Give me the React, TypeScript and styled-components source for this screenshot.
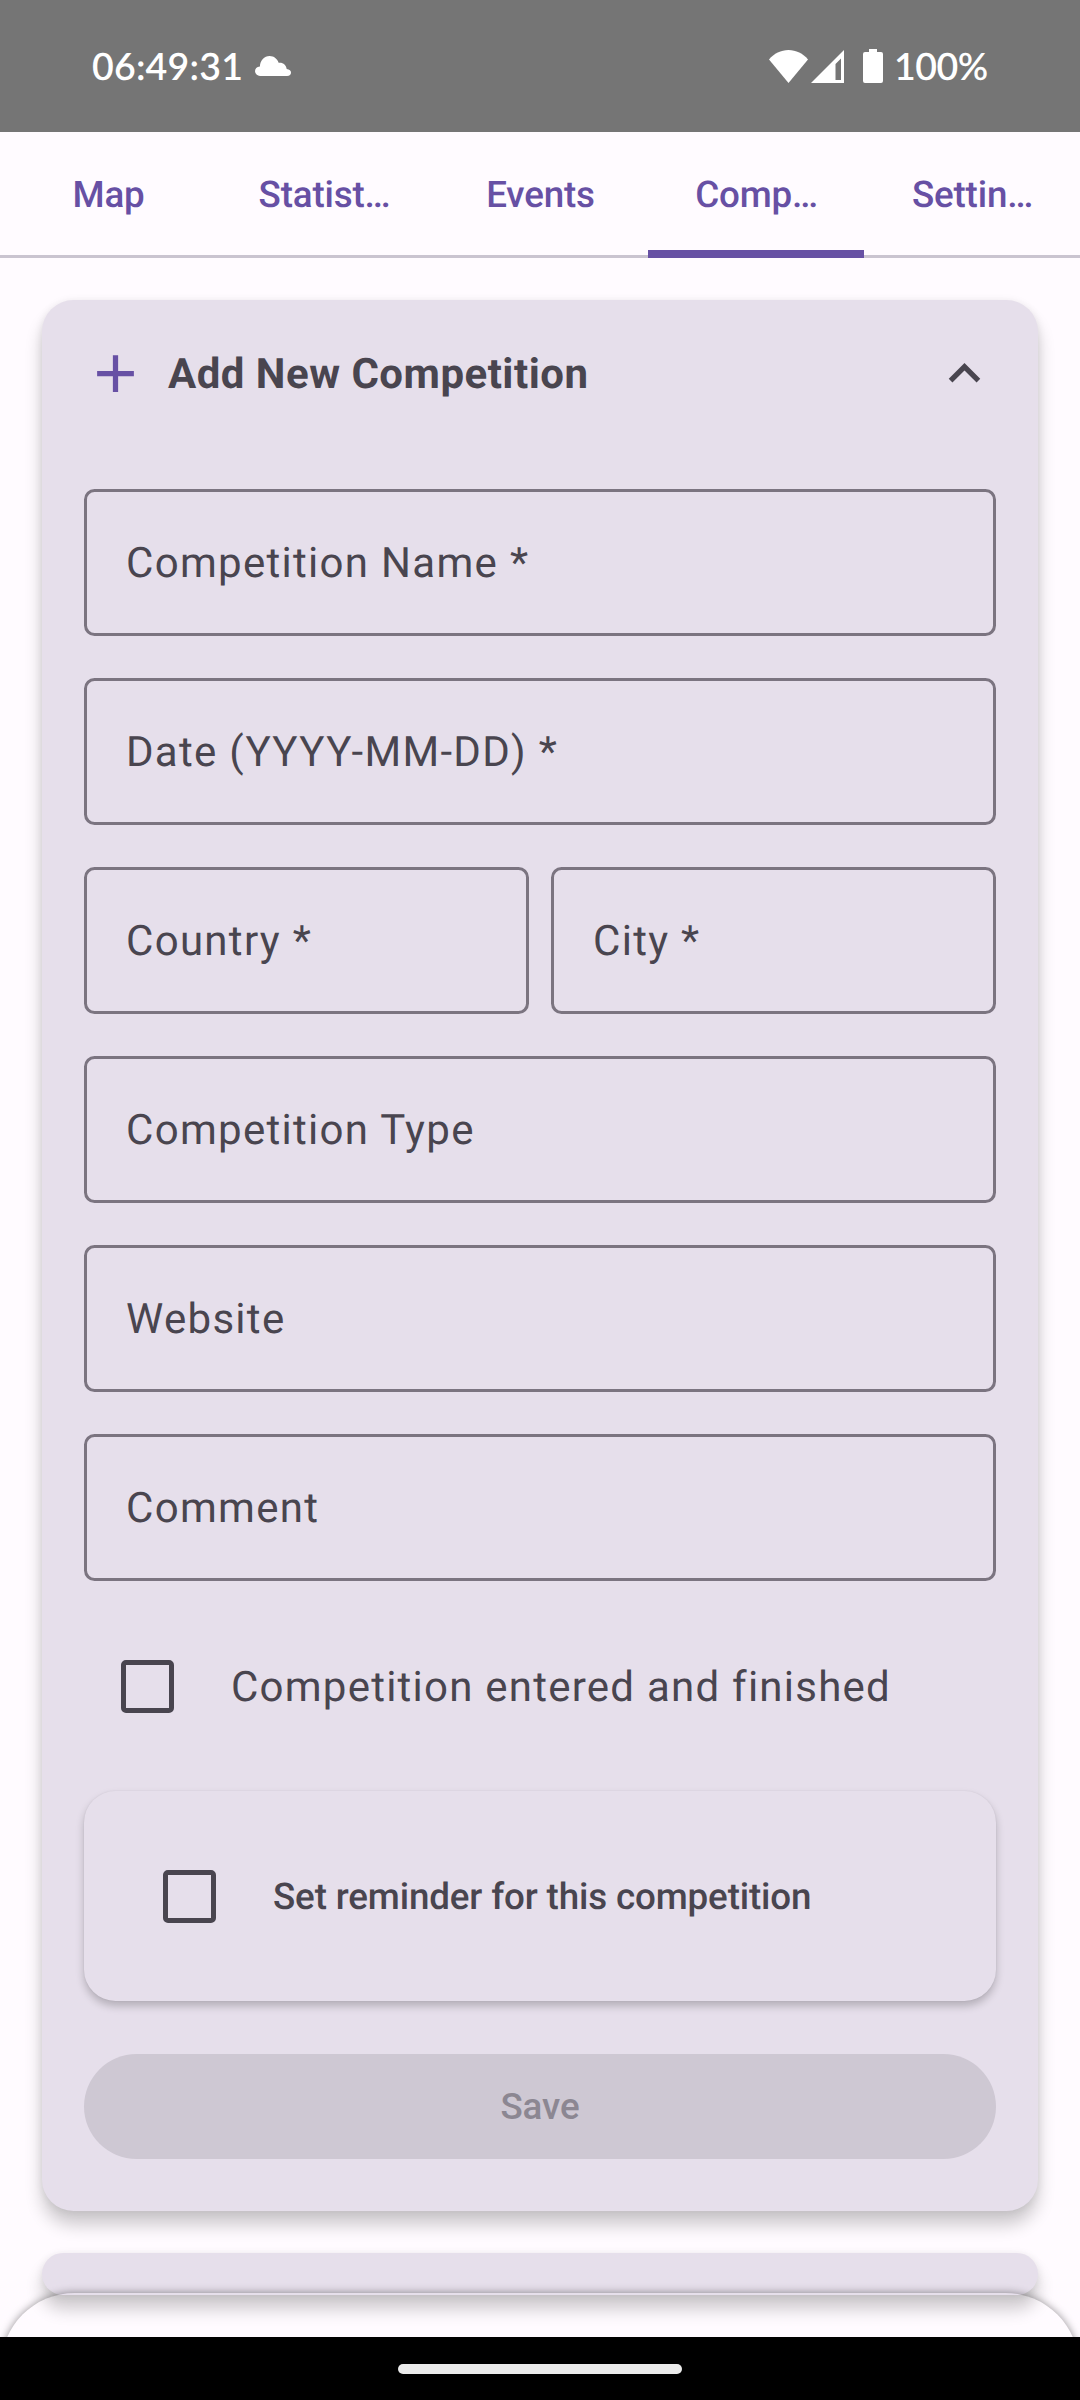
import React from "react";
import styled, { createGlobalStyle } from "styled-components";

const color = {
  background: "#fffbff",
  surface: "#e6dfeb",
  onSurface: "#49454f",
  outline: "#7b7480",
  divider: "#cac4d0",
  primary: "#6750a4",
};

const GlobalStyle = createGlobalStyle`
  * { box-sizing: border-box; }
  body { margin: 0; background: ${color.background}; }
`;

const Screen = styled.div`
  width: 1080px;
  height: 2400px;
  display: flex;
  flex-direction: column;
  overflow: hidden;
  background: ${color.background};
  color: ${color.onSurface};
  font-family: Roboto, "Noto Sans", sans-serif;
  text-rendering: geometricPrecision;
  white-space: nowrap;
`;

const StatusBar = styled.header`
  flex: none;
  height: 132px;
  padding: 0 93px 0 92px;
  display: flex;
  align-items: center;
  justify-content: space-between;
  background: #757575;
  color: #fff;
`;

const StatusGroup = styled.div`
  display: flex;
  align-items: center;
`;

const StatusText = styled.span<{ $width: number; $spacing: number }>`
  width: ${(p) => p.$width}px;
  font-family: Lato, sans-serif;
  font-size: 37.5px;
  line-height: 44px;
  font-weight: 600;
  letter-spacing: ${(p) => p.$spacing}px;
`;

const StatusIcon = styled.svg<{ $gap: number }>`
  display: block;
  flex: none;
  fill: currentColor;
  margin-left: ${(p) => p.$gap}px;
`;

const TabBar = styled.nav`
  flex: none;
  height: 126px;
  display: grid;
  grid-template-columns: repeat(5, 1fr);
  box-shadow: inset 0 -3px 0 ${color.divider};
`;

const Tab = styled.a<{ $active: boolean }>`
  display: flex;
  align-items: center;
  justify-content: center;
  padding: ${(p) => (p.$active ? "6px 0 0 1px" : "0 0 2px 1px")};
  border-bottom: ${(p) => (p.$active ? `8px solid ${color.primary}` : "none")};
  color: ${color.primary};
  font-size: 36.75px;
  font-weight: 500;
  letter-spacing: -0.16px;
`;

const Content = styled.main`
  position: relative;
  flex: 1;
  min-height: 0;
  overflow: hidden;
  padding: 42px;
  display: flex;
  flex-direction: column;
  gap: 42px;
`;

const Card = styled.section`
  flex: none;
  padding: 42px;
  border-radius: 31.5px;
  background: ${color.surface};
  box-shadow: 0 14px 17px rgba(0, 0, 0, 0.2), 0 1px 8px rgba(0, 0, 0, 0.08);
`;

const CollapsedCard = styled(Card)`
  height: 42px;
  padding: 0;
  border-radius: 21px;
`;

const CardHeader = styled.div`
  display: flex;
  align-items: center;
  height: 63px;
  margin-bottom: 84px;
`;

const HeaderIcon = styled.svg<{ $color: string }>`
  display: block;
  flex: none;
  width: 63px;
  height: 63px;
  fill: ${(p) => p.$color};
`;

const Title = styled.h2`
  flex: 1;
  margin: 0 0 0 21px;
  padding-top: 2px;
  font-size: 42px;
  line-height: 61px;
  font-weight: 700;
  letter-spacing: 0.48px;
`;

const Form = styled.div`
  display: flex;
  flex-direction: column;
  gap: 42px;
`;

const FieldRow = styled.div`
  display: grid;
  grid-template-columns: 445px 445px;
  justify-content: space-between;
`;

const Field = styled.div`
  height: 147px;
  padding: 2px 39px 0;
  display: flex;
  align-items: center;
  border: 3px solid ${color.outline};
  border-radius: 10.5px;
  font-size: 42px;
  letter-spacing: 1.3px;
`;

const CheckRow = styled.label`
  display: flex;
  align-items: center;
  height: 126px;
  gap: 57px;
  padding-left: 37px;
`;

const Box = styled.span`
  flex: none;
  width: 53px;
  height: 53px;
  border: 5px solid ${color.onSurface};
  border-radius: 5px;
`;

const CheckText = styled.span<{ $strong?: boolean }>`
  padding-top: ${(p) => (p.$strong ? 0 : 2)}px;
  font-size: ${(p) => (p.$strong ? 36.75 : 42)}px;
  font-weight: ${(p) => (p.$strong ? 500 : 400)};
  letter-spacing: ${(p) => (p.$strong ? -0.14 : 1.24)}px;
`;

const ReminderCard = styled.div`
  height: 210px;
  padding: 42px;
  border-radius: 31.5px;
  background: ${color.surface};
  box-shadow: 0 5px 8px rgba(0, 0, 0, 0.22), 0 0 2px rgba(0, 0, 0, 0.07);
`;

const SaveButton = styled.button`
  height: 105px;
  margin: 11px 0 10px;
  padding: 0;
  border: 0;
  border-radius: 52.5px;
  background: #cec8d3;
  color: #8c8792;
  font-family: inherit;
  font-size: 36.75px;
  font-weight: 500;
  letter-spacing: -0.1px;
`;

/* Peeking edge of the translucent bottom sheet, drawn over the list. */
const SheetEdge = styled.div`
  position: absolute;
  left: 1px;
  right: 1px;
  top: 2035px;
  height: 200px;
  border-radius: 73.5px 73.5px 0 0;
  box-shadow: 0 0 9px rgba(0, 0, 0, 0.42);
`;

const NavigationBar = styled.footer`
  flex: none;
  height: 63px;
  display: flex;
  justify-content: center;
  padding-top: 27px;
  background: #000;
`;

const GestureHandle = styled.div`
  width: 284px;
  height: 10px;
  border-radius: 5px;
  background: #ebebeb;
`;

const tabs = ["Map", "Statist…", "Events", "Comp…", "Settin…"];
const activeTab = 3;

export default function App() {
  return (
    <Screen>
      <GlobalStyle />
      <StatusBar>
        <StatusGroup>
          <StatusText $width={163} $spacing={0.2}>06:49:31</StatusText>
          <StatusIcon $gap={0} width="36" height="20" viewBox="0 0 36 20">
            <path d="M5 20A5 5 0 0 1 0 15.200Q0 10.900 4.900 10.400C5.200 4.400 9.200 0 14.600 0C19 0 22.300 2.800 23.600 6.800C28 6.200 31.200 8.900 31.700 13Q36 13.600 36 16.600Q36 20 32 20Z" />
          </StatusIcon>
        </StatusGroup>
        <StatusGroup>
          <StatusIcon $gap={0} width="39" height="33" viewBox="0 0 39 33">
            <path d="M19.500 33L0 9.500C5 3.500 12 0 19.500 0S34 3.500 39 9.500Z" />
          </StatusIcon>
          <StatusIcon $gap={3} width="33" height="33" viewBox="0 0 33 33">
            <path fillRule="evenodd" d="M33 0V33H0ZM30 8.500L24.500 14V30H30Z" />
          </StatusIcon>
          <StatusIcon $gap={19} width="20" height="34" viewBox="0 0 20 34">
            <path d="M6 0H14V3H18Q20 3 20 5V32Q20 34 18 34H2Q0 34 0 32V5Q0 3 2 3H6Z" />
          </StatusIcon>
          <StatusIcon $gap={0} width="11" height="1" viewBox="0 0 11 1" />
          <StatusText $width={93} $spacing={-0.5}>100%</StatusText>
        </StatusGroup>
      </StatusBar>

      <TabBar>
        {tabs.map((name, i) => (
          <Tab key={name} $active={i === activeTab}>
            {name}
          </Tab>
        ))}
      </TabBar>

      <Content>
        <Card>
          <CardHeader>
            <HeaderIcon $color={color.primary} viewBox="0 0 24 24">
              <path d="M19 13h-6v6h-2v-6H5v-2h6V5h2v6h6v2z" />
            </HeaderIcon>
            <Title>Add New Competition</Title>
            <HeaderIcon $color={color.onSurface} viewBox="0 0 24 24">
              <path d="M12 8l-6 6 1.410 1.410L12 10.830l4.590 4.580L18 14z" />
            </HeaderIcon>
          </CardHeader>
          <Form>
            <Field>Competition Name *</Field>
            <Field>Date (YYYY-MM-DD) *</Field>
            <FieldRow>
              <Field>Country *</Field>
              <Field>City *</Field>
            </FieldRow>
            <Field>Competition Type</Field>
            <Field>Website</Field>
            <Field>Comment</Field>
            <CheckRow>
              <Box />
              <CheckText>Competition entered and finished</CheckText>
            </CheckRow>
            <ReminderCard>
              <CheckRow>
                <Box />
                <CheckText $strong>Set reminder for this competition</CheckText>
              </CheckRow>
            </ReminderCard>
            <SaveButton>Save</SaveButton>
          </Form>
        </Card>
        <CollapsedCard />
        <SheetEdge />
      </Content>

      <NavigationBar>
        <GestureHandle />
      </NavigationBar>
    </Screen>
  );
}
